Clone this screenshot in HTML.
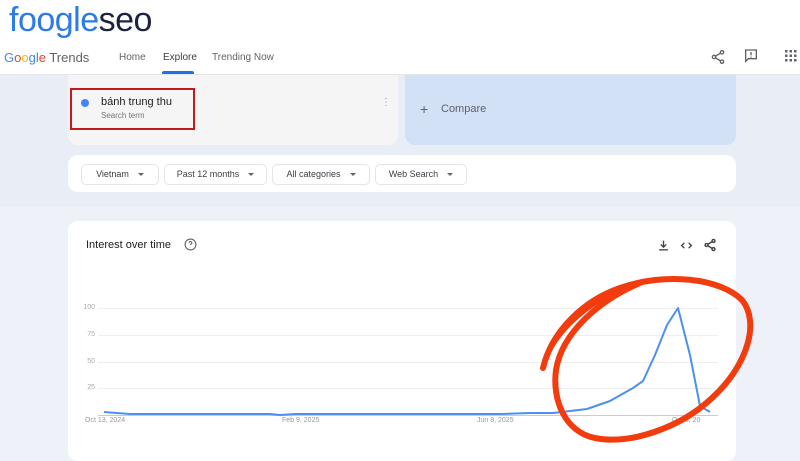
<!DOCTYPE html>
<html><head><meta charset="utf-8"><style>
*{margin:0;padding:0;box-sizing:border-box}
body{width:800px;height:450px;overflow:hidden;font-family:"Liberation Sans",sans-serif;background:#eef2f8;position:relative}
.hdr{position:absolute;left:0;top:0;width:800px;height:75px;background:#fff;border-bottom:1px solid #e4e6ea}
.abs{position:absolute}
.nav{font-size:10px;color:#5f6368;top:52px}
.card{position:absolute;border-radius:10px}
.chip{position:absolute;top:164px;height:21px;border:1px solid #e3e5e8;border-radius:5px;font-size:9px;color:#3c4043;text-align:center;line-height:19px;background:#fff}
.chip span{display:inline-block;width:0;height:0;border-left:3px solid transparent;border-right:3px solid transparent;border-top:3px solid #666;margin-left:9px;vertical-align:middle}
.yl{position:absolute;font-size:7px;color:#aaa;right:705px}
.xl{position:absolute;font-size:7px;color:#999;top:417px}
</style></head><body>
<div class="abs" style="top:0;left:0;width:800px;height:207px;background:#e8edf6"></div>
<div class="hdr"></div>
<div class="abs" style="left:9px;top:2px;font-size:34px;letter-spacing:-0.5px;font-weight:normal;line-height:36px"><span style="color:#2d7be5">foogle</span><span style="color:#1b2340">seo</span></div>
<div class="abs" style="left:4px;top:50px;font-size:13px;color:#5f6368"><span style="color:#4285f4">G</span><span style="color:#ea4335">o</span><span style="color:#fbbc05">o</span><span style="color:#4285f4">g</span><span style="color:#34a853">l</span><span style="color:#ea4335">e</span> Trends</div>
<div class="abs nav" style="left:119px">Home</div>
<div class="abs nav" style="left:163px;color:#3c4043">Explore</div>
<div class="abs" style="left:162px;top:71px;width:32px;height:3px;background:#1a73e8;border-radius:2px 2px 0 0"></div>
<div class="abs nav" style="left:212px">Trending Now</div>
<svg class="abs" style="left:710px;top:49px" width="16" height="16" viewBox="0 0 24 24" fill="none" stroke="#5f6368" stroke-width="2"><circle cx="18" cy="5" r="2.5"/><circle cx="6" cy="12" r="2.5"/><circle cx="18" cy="19" r="2.5"/><path d="M8 11l8-5M8 13l8 5"/></svg>
<svg class="abs" style="left:743px;top:48px" width="16" height="16" viewBox="0 0 24 24" fill="none" stroke="#5f6368" stroke-width="2"><path d="M4 3h16v13H8l-4 4z"/><path d="M12 6v5M12 13v1.5"/></svg>
<svg class="abs" style="left:785px;top:50px" width="12" height="12" viewBox="0 0 12 12" fill="#5f6368"><rect x="0" y="0" width="2.5" height="2.5"/><rect x="4.5" y="0" width="2.5" height="2.5"/><rect x="9" y="0" width="2.5" height="2.5"/><rect x="0" y="4.5" width="2.5" height="2.5"/><rect x="4.5" y="4.5" width="2.5" height="2.5"/><rect x="9" y="4.5" width="2.5" height="2.5"/><rect x="0" y="9" width="2.5" height="2.5"/><rect x="4.5" y="9" width="2.5" height="2.5"/><rect x="9" y="9" width="2.5" height="2.5"/></svg>

<div class="card" style="left:68px;top:75px;width:330px;height:70px;background:#f5f5f5;border-radius:0 0 10px 10px"></div>
<div class="abs" style="left:70px;top:88px;width:125px;height:42px;border:2px solid #c11a1a"></div>
<div class="abs" style="left:81px;top:99px;width:8px;height:8px;border-radius:50%;background:#4285f4"></div>
<div class="abs" style="left:101px;top:96px;font-size:11px;color:#202124">bánh trung thu</div>
<div class="abs" style="left:101px;top:111px;font-size:8px;color:#777">Search term</div>
<div class="abs" style="left:381px;top:101px;font-size:10px;color:#999;line-height:4px">⋮</div>
<div class="card" style="left:405px;top:75px;width:331px;height:70px;background:#d2e1f6;border-radius:0 0 10px 10px"></div>
<div class="abs" style="left:420px;top:101px;font-size:14px;color:#5f6368">+</div>
<div class="abs" style="left:441px;top:103px;font-size:11px;color:#5f6368">Compare</div>

<div class="card" style="left:68px;top:155px;width:668px;height:37px;background:#fff"></div>
<div class="chip" style="left:81px;width:78px">Vietnam<span></span></div>
<div class="chip" style="left:164px;width:103px">Past 12 months<span></span></div>
<div class="chip" style="left:272px;width:98px">All categories<span></span></div>
<div class="chip" style="left:375px;width:92px">Web Search<span></span></div>

<div class="card" style="left:68px;top:221px;width:668px;height:240px;background:#fff"></div>
<div class="abs" style="left:86px;top:239px;font-size:11px;color:#202124">Interest over time</div>
<svg class="abs" style="left:184px;top:238px" width="13" height="13" viewBox="0 0 24 24" fill="none" stroke="#5f6368" stroke-width="2"><circle cx="12" cy="12" r="10"/><path d="M9.5 9a2.5 2.5 0 1 1 3.5 2.3c-.7.3-1 .9-1 1.7M12 17v.5"/></svg>
<svg class="abs" style="left:657px;top:239px" width="13" height="13" viewBox="0 0 24 24" fill="none" stroke="#444" stroke-width="2.5"><path d="M12 3v12M7 10l5 5 5-5M4 20h16"/></svg>
<svg class="abs" style="left:680px;top:239px" width="13" height="13" viewBox="0 0 24 24" fill="none" stroke="#444" stroke-width="2.5"><path d="M8 7l-5 5 5 5M16 7l5 5-5 5"/></svg>
<svg class="abs" style="left:703px;top:238px" width="14" height="14" viewBox="0 0 24 24" fill="none" stroke="#444" stroke-width="2.5"><circle cx="18" cy="5" r="2.5"/><circle cx="6" cy="12" r="2.5"/><circle cx="18" cy="19" r="2.5"/><path d="M8 11l8-5M8 13l8 5"/></svg>

<div class="yl" style="top:304px">100</div>
<div class="yl" style="top:331px">75</div>
<div class="yl" style="top:358px">50</div>
<div class="yl" style="top:384px">25</div>
<div class="xl" style="left:85px">Oct 13, 2024</div>
<div class="xl" style="left:282px">Feb 9, 2025</div>
<div class="xl" style="left:477px">Jun 8, 2025</div>
<div class="xl" style="left:672px">Oct 5, 20</div>

<svg class="abs" style="left:0;top:0" width="800" height="450">
<g stroke="#eeeeee" stroke-width="1"><path d="M98 308.5H718M98 335.5H718M98 362.5H718M98 388.5H718"/></g>
<path d="M98 415.5H718" stroke="#ccc" stroke-width="1"/>
<polyline fill="none" stroke="#4d8ff2" stroke-width="2" stroke-linejoin="round" points="104,412 130,414 270,414 280,415 295,414 500,414 530,413 553,413 587,409 610,401 633,388 643,381 655,355 667,325 678,308 690,355 700,406 710,412"/>
<path fill="none" stroke="#f23c0e" stroke-width="6" stroke-linecap="round" d="M543 368 C552 330 585 300 620 288 C665 272 720 278 742 300 C760 322 748 365 712 398 C680 428 630 445 595 438 C565 432 552 400 556 370 C562 332 600 300 640 283"/>
<path fill="none" stroke="#f23c0e" stroke-width="3" d="M546 360 C560 325 600 295 640 282"/>
</svg>
</body></html>
